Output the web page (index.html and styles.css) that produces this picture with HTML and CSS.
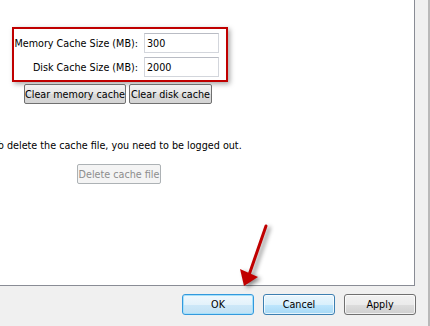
FILE: index.html
```html
<!DOCTYPE html>
<html>
<head>
<meta charset="utf-8">
<link rel="stylesheet" href="styles.css">
</head>
<body>
<div class="window">
  <div class="panel">
    <div class="cachebox">
      <label class="lbl">Memory Cache Size (MB):</label>
      <input class="field" type="text" value="300">
      <label class="lbl">Disk Cache Size (MB):</label>
      <input class="field" type="text" value="2000">
    </div>
    <div class="clearrow">
      <button class="btn-old btn-mem">Clear memory cache</button>
      <button class="btn-old btn-disk">Clear disk cache</button>
    </div>
    <p class="note">To delete the cache file, you need to be logged out.</p>
    <button class="btn-old btn-delete" disabled>Delete cache file</button>
  </div>
  <div class="footer">
    <button class="btn btn-ok">OK</button>
    <button class="btn btn-cancel">Cancel</button>
    <button class="btn btn-apply">Apply</button>
  </div>
  <svg class="arrow" width="40" height="70" viewBox="0 0 40 70">
    <line x1="30" y1="3" x2="13" y2="52" stroke="#c00000" stroke-width="3" stroke-linecap="round"/>
    <polygon points="4,46 22,54 8,63" fill="#c00000"/>
  </svg>
</div>
</body>
</html>
```
FILE: styles.css
```css
html, body {
  margin: 0;
  padding: 0;
}
body {
  width: 430px;
  height: 326px;
  overflow: hidden;
  background: #f0f0f0;
  font-family: "DejaVu Sans Condensed", "DejaVu Sans", sans-serif;
  font-size: 10.7px;
  color: #000;
}
.window {
  position: relative;
  width: 428px;
  height: 326px;
  border-right: 2px solid #b9b9b9;
  background: #f0f0f0;
}
.panel {
  width: 414px;
  height: 285px;
  background: #fff;
  border-right: 1px solid #898c95;
  border-bottom: 1px solid #898c95;
  overflow: hidden;
  display: flex;
  flex-direction: column;
  align-items: flex-start;
}
.cachebox {
  margin: 27px 0 0 12px;
  border: 2px solid #c00000;
  padding: 4px 7px 3px 0;
  display: grid;
  grid-template-columns: 126px 75px;
  column-gap: 4px;
  row-gap: 4px;
  align-items: center;
  box-shadow: 2px 2px 5px rgba(0,0,0,0.35);
}
.lbl {
  text-align: right;
  padding-right: 2px;
  white-space: nowrap;
}
.field {
  box-sizing: border-box;
  width: 75px;
  height: 20px;
  margin: 0;
  border: 1px solid #d3d6dc;
  border-top-color: #b9bcc4;
  padding: 1px 2px;
  font: inherit;
  color: #000;
  background: #fff;
}
.clearrow {
  display: flex;
  gap: 3px;
  margin: 2px 0 0 24px;
}
.btn-old {
  box-sizing: border-box;
  height: 20px;
  margin: 0;
  padding: 0;
  font: inherit;
  color: #000;
  border: 1px solid #707070;
  border-radius: 2px;
  background: linear-gradient(#f2f2f2, #e6e6e6 50%, #dadada 51%, #d4d4d4);
  white-space: nowrap;
}
.btn-mem { width: 102px; }
.btn-disk { width: 83px; }
.note {
  margin: 35px 0 0 -6px;
  line-height: 14px;
  white-space: nowrap;
}
.btn-delete {
  margin: 11px 0 0 77px;
  width: 84px;
  height: 20px;
  color: #8d8d8d;
  border-color: #adb2b5;
  background: #f4f4f4;
}
.footer {
  display: flex;
  justify-content: flex-end;
  gap: 9px;
  padding: 8px 12px 0 0;
}
.btn {
  box-sizing: border-box;
  width: 72px;
  height: 21px;
  margin: 0;
  padding: 0;
  font: inherit;
  color: #000;
  border-radius: 3px;
  border: 1px solid #707070;
  background: linear-gradient(#f2f2f2, #ebebeb 50%, #dddddd 51%, #cfcfcf);
  box-shadow: inset 0 0 0 1px rgba(255,255,255,0.7);
}
.btn-ok {
  border-color: #3399dd;
  background: linear-gradient(#f0f8fd, #e3f2fb 50%, #cde8f8 51%, #c2e1f4);
  box-shadow: inset 0 0 0 1px #a6e0fa;
}
.btn-cancel {
  border-color: #3c7fb1;
  background: linear-gradient(#eaf6fd, #d9f0fc 50%, #bee6fd 51%, #a7d9f5);
}
.arrow {
  position: absolute;
  left: 236px;
  top: 223px;
  overflow: visible;
  filter: drop-shadow(3px 2px 2px rgba(0,0,0,0.45));
}
```
